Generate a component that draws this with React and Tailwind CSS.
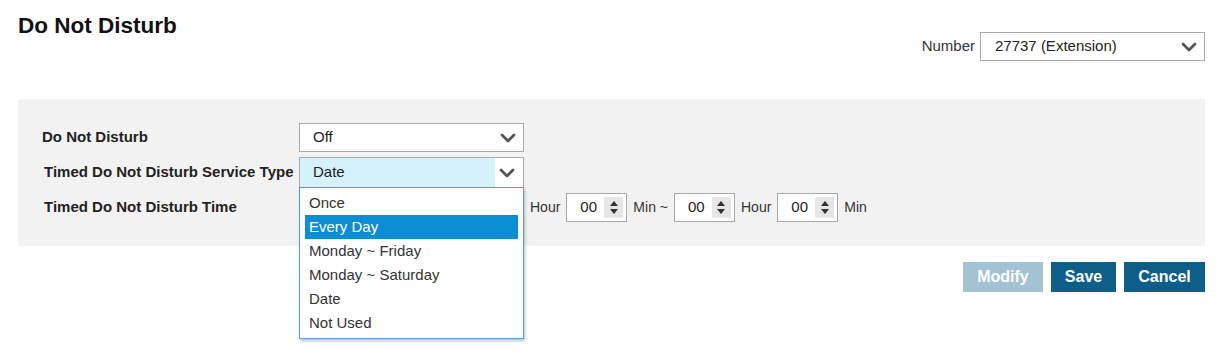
import { useState } from 'react';

const font = { fontFamily: '"Liberation Sans", Arial, sans-serif' };

function Chevron() {
  return (
    <svg width="16" height="10" viewBox="0 0 16 10" className="shrink-0">
      <polyline points="2,2 8,8 14,2" fill="none" stroke="#555" strokeWidth="2.8" strokeLinecap="round" strokeLinejoin="round" />
    </svg>
  );
}

function SelectBox({ value, className = '' }) {
  return (
    <div className={`flex items-center justify-between border border-[#a9a9a9] bg-white pl-[13px] pr-[7px] text-[15px] text-[#222] ${className}`}>
      <span>{value}</span>
      <Chevron />
    </div>
  );
}

function Spinner() {
  return (
    <div className="flex h-[21px] w-[19px] flex-col items-center justify-center gap-[3px] bg-[#e6e6e6]">
      <svg width="8" height="5" viewBox="0 0 8 5"><polygon points="4,0 8,5 0,5" fill="#333" /></svg>
      <svg width="8" height="5" viewBox="0 0 8 5"><polygon points="0,0 8,0 4,5" fill="#333" /></svg>
    </div>
  );
}

function TimeInput() {
  return (
    <div className="flex h-[29px] w-[61px] items-center justify-between border border-[#a9a9a9] bg-white pl-[13px] pr-[3px] text-[15px] text-[#222]">
      <span>00</span>
      <Spinner />
    </div>
  );
}

const options = ['Once', 'Every Day', 'Monday ~ Friday', 'Monday ~ Saturday', 'Date', 'Not Used'];

export default function App() {
  const [active] = useState('Every Day');

  return (
    <div className="min-h-[358px] w-[1224px] bg-white pl-[18px] pr-[19px] pt-[9px]" style={font}>
      {/* Header */}
      <div className="flex items-start justify-between">
        <h1 className="text-[22.5px] font-bold text-[#111]">Do Not Disturb</h1>
        <div className="mt-[23px] flex items-center gap-[5px]">
          <span className="text-[15px] text-[#333]">Number</span>
          <SelectBox value="27737 (Extension)" className="h-[29px] w-[225px] pl-[14px]" />
        </div>
      </div>

      {/* Settings panel */}
      <div className="mt-[38px] flex flex-col gap-[5px] bg-[#f2f2f2] px-[24px] py-[24px]">
        <div className="flex items-center">
          <label className="w-[257px] text-[15px] font-bold text-[#222]">Do Not Disturb</label>
          <SelectBox value="Off" className="h-[29px] w-[225px]" />
        </div>

        <div className="flex items-center">
          <label className="w-[257px] pl-[2px] text-[15px] font-bold text-[#222]">Timed Do Not Disturb Service Type</label>
          <div className="relative z-10 w-[225px]">
            <div className="flex h-[30px] items-stretch border border-b-0 border-[#a9a9a9] bg-white">
              <div className="flex w-[195px] items-center bg-[#d4f1fc] pl-[13px] text-[15px] text-[#222]">Date</div>
              <div className="flex flex-1 items-center justify-center pr-[4px]">
                <Chevron />
              </div>
            </div>
            <ul className="absolute left-0 top-[30px] w-[225px] border border-[#5b9bd5] bg-white px-[5px] py-[3px] shadow-[1px_2px_3px_rgba(0,0,0,0.25)]">
              {options.map((o) => (
                <li
                  key={o}
                  className={`flex h-[24px] items-center pl-[4px] text-[15px] ${o === active ? 'bg-[#0b8dd3] text-white' : 'text-[#333]'}`}
                >
                  {o}
                </li>
              ))}
            </ul>
          </div>
        </div>

        <div className="mt-[1px] flex items-center">
          <label className="w-[257px] pl-[2px] text-[15px] font-bold text-[#222]">Timed Do Not Disturb Time</label>
          <div className="flex items-center gap-[6px] text-[14px] text-[#333]">
            <div className="h-[29px] w-[158px] border border-[#a9a9a9] bg-white" />
            <TimeInput />
            <span>Hour</span>
            <TimeInput />
            <span>Min ~</span>
            <TimeInput />
            <span>Hour</span>
            <TimeInput />
            <span>Min</span>
          </div>
        </div>
      </div>

      {/* Actions */}
      <div className="mt-[16px] flex justify-end gap-[8px]">
        <button className="h-[30px] w-[80px] bg-[#a3c3d4] text-[16px] font-bold text-white">Modify</button>
        <button className="h-[30px] w-[65px] bg-[#0d5f8a] text-[16px] font-bold text-white">Save</button>
        <button className="h-[30px] w-[81px] bg-[#0d5f8a] text-[16px] font-bold text-white">Cancel</button>
      </div>
    </div>
  );
}
